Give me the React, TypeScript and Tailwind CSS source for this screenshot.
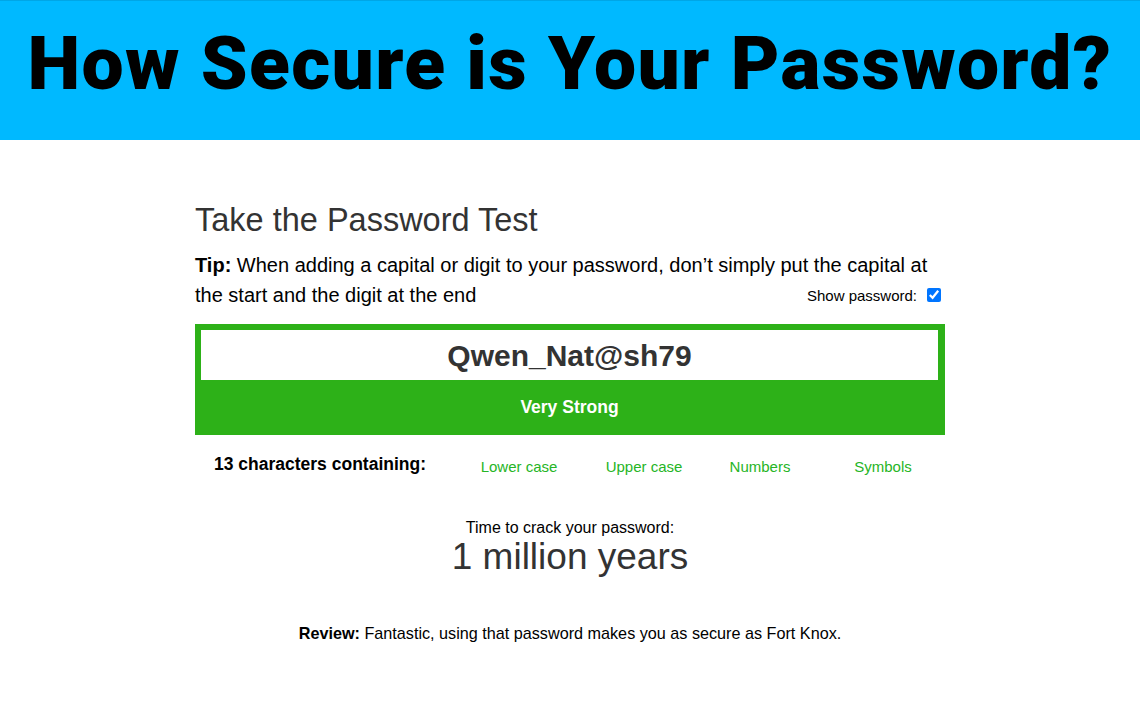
import React from "react";

export default function App() {
  const items = [
    { label: "Lower case", w: "w-[148px]" },
    { label: "Upper case", w: "w-[102px]" },
    { label: "Numbers", w: "w-[130px]" },
    { label: "Symbols", w: "w-[116px]" },
  ];
  return (
    <div className="min-h-[710px] bg-white" style={{ fontFamily: '"Liberation Sans", Arial, sans-serif' }}>
      <header className="h-[140px] bg-[#00b9ff] border-t border-[#00a6e6] flex items-center justify-center">
        <h1
          className="text-[75px] leading-none font-black text-black tracking-[1.3px] -mt-[14px]"
          style={{ fontFamily: 'Roboto, "Liberation Sans", sans-serif' }}
        >
          How Secure is Your Password?
        </h1>
      </header>

      <main className="w-[750px] mx-auto">
        <h2 className="mt-[62px] text-[32.5px] leading-[36px] text-[#333]">Take the Password Test</h2>

        <div className="mt-[12px] text-[20px] leading-[30px] text-black">
          <div>
            <b>Tip:</b> When adding a capital or digit to your password, don’t simply put the capital at
          </div>
          <div className="h-[30px] flex items-center justify-between">
            <span>the start and the digit at the end</span>
            <label className="flex items-center gap-[10px] text-[15px] leading-[18px] pr-[4px]">
              <span className="mt-[2px]">Show password:</span>
              <input type="checkbox" defaultChecked className="w-[14px] h-[14px] m-0 -mt-[1px] accent-[#0075ff]" />
            </label>
          </div>
        </div>

        <div className="mt-[14px] bg-[#2db118] p-[6px] pr-[7px]">
          <div className="h-[50px] bg-white flex items-center justify-center text-[30px] font-bold text-[#333]">
            Qwen_Nat@sh79
          </div>
          <div className="h-[49px] flex items-center justify-center pt-[6px] text-[17.5px] font-bold text-white">
            Very Strong
          </div>
        </div>

        <div className="mt-[14px] flex items-center">
          <div className="w-[250px] text-center text-[17.5px] font-bold text-black leading-[24px]">
            13 characters containing:
          </div>
          {items.map((it) => (
            <div key={it.label} className={`${it.w} text-center text-[15px] text-[#26b526] leading-[24px] pt-[6px]`}>
              {it.label}
            </div>
          ))}
        </div>

        <div className="mt-[40px] text-center">
          <div className="text-[16px] leading-[18px] text-black">Time to crack your password:</div>
          <div className="text-[37px] leading-[40px] text-[#333]">1 million years</div>
        </div>

        <p className="mt-[46px] text-center text-[16.2px] leading-[20px] text-black">
          <b>Review:</b> Fantastic, using that password makes you as secure as Fort Knox.
        </p>
      </main>
    </div>
  );
}
